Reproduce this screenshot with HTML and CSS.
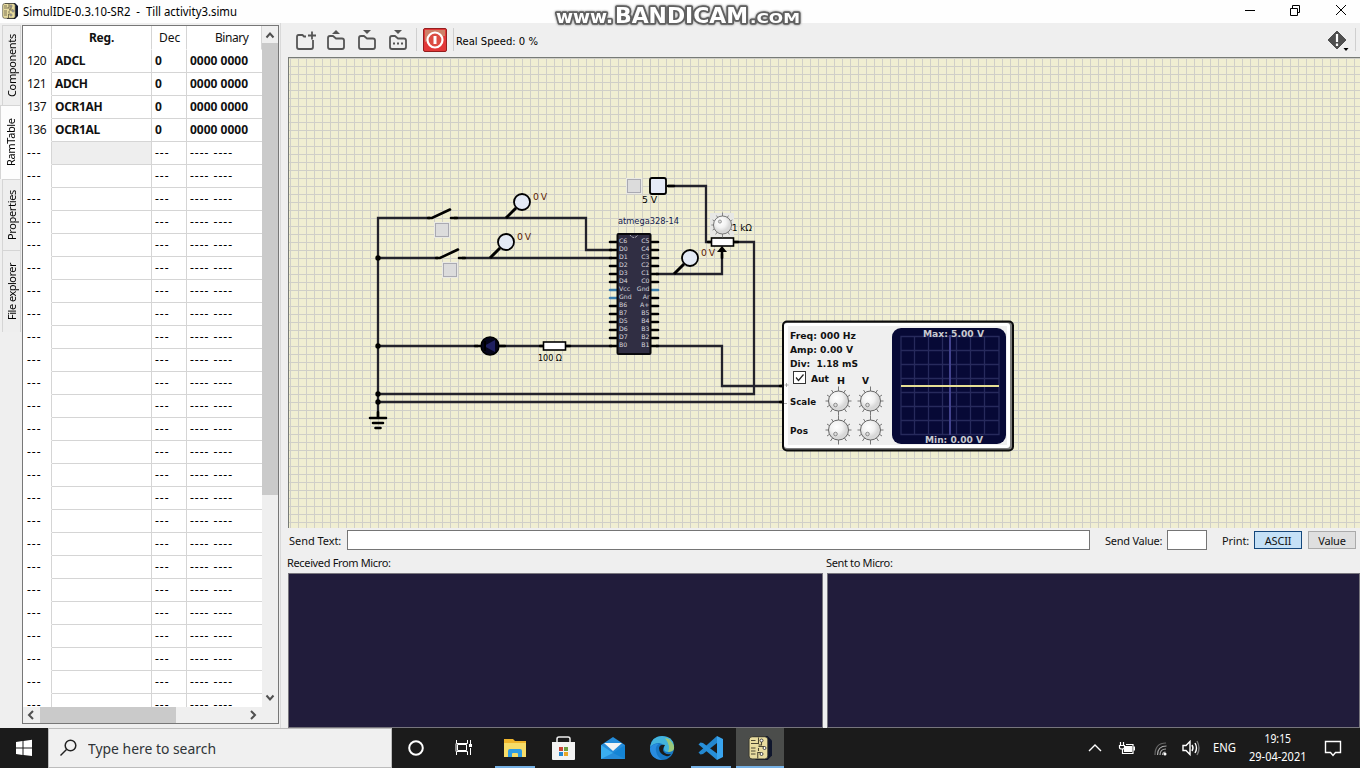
FILE: index.html
```
<!DOCTYPE html>
<html lang="en">
<head>
<meta charset="utf-8">
<title>SimulIDE-0.3.10-SR2 - Till activity3.simu</title>
<link rel="stylesheet" href="styles.css">
</head>
<body>
<div class="screen">
  <header class="titlebar">
    <svg class="app-icon" width="16" height="16" viewBox="0 0 16 16"><use href="#chip-logo"/></svg>
    <svg class="title" width="240" height="22"><text x="0" y="16" textLength="214" lengthAdjust="spacingAndGlyphs" xml:space="preserve">SimulIDE-0.3.10-SR2  -  Till activity3.simu</text></svg>
    <div class="window-buttons">
      <svg width="120" height="23" viewBox="1236 0 120 23" fill="none" stroke="#000" stroke-width="1"><path d="M1245 10.500h10M1290.500 8.500h7v7h-7zM1292.500 8v-2.500h7v7h-2M1336 5l10 10M1346 5l-10 10"/></svg>
    </div>
  </header>

  <svg class="watermark" width="264" height="32" viewBox="548 0 264 32">
    <g class="watermark-glow"><text x="556" y="22.500" textLength="57" lengthAdjust="spacingAndGlyphs" font-size="18.500">www.</text><text x="615" y="23" textLength="133" lengthAdjust="spacingAndGlyphs" font-size="20.500">BANDICAM</text><text x="750" y="22.500" textLength="50" lengthAdjust="spacingAndGlyphs" font-size="14.500">.COM</text></g>
  </svg>

  <div class="workspace">
    <nav class="side-tabs">
      <div class="tab tab-components">Components</div>
      <div class="tab tab-ram active">RamTable</div>
      <div class="tab tab-properties">Properties</div>
      <div class="tab tab-files">File explorer</div>
    </nav>
    <section class="dock">
      <div class="ram-panel">
        <div class="ram-view">
          <div class="ram-table" id="ram">
            <div class="head"></div><div class="head reg-head">Reg.</div><div class="head">Dec</div><div class="head bin-head">Binary</div>
          </div>
          <div class="vscroll">
            <svg width="16" height="17"><path d="M4.500 11.500l3.500-4 3.500 4"/></svg>
            <div class="vthumb"></div>
            <svg class="down" width="16" height="17"><path d="M4.500 5.500l3.500 4 3.500-4"/></svg>
          </div>
        </div>
        <div class="hscroll">
          <svg width="17" height="16"><path d="M10 4l-4 4 4 4"/></svg>
          <div class="hthumb"></div>
          <svg class="right" width="17" height="16"><path d="M7 4l4 4-4 4"/></svg>
        </div>
      </div>
    </section>

    <main class="main">
      <div class="toolbar">
        <svg width="270" height="34" viewBox="288 23 270 34">
          <g fill="none" stroke="#555" stroke-width="1.800" stroke-linejoin="round">
            <path d="M306 36.500h-2l-1.500-1.500h-4q-1.500 0-1.500 2v10q0 2 2 2h12q2 0 2-2v-7M308 35.500h8M312 31.500v8"/>
            <path id="folder" d="M344 40v7q0 2-2 2h-12q-2 0-2-2v-9q0-2 2-2h3l3 2.500h6q2 0 2 2"/>
            <use href="#folder" x="31"/><use href="#folder" x="62"/>
          </g>
          <g fill="#555"><path d="M332 34l4-4 4 4zM363 30h8l-4 4zM394 30h8l-4 4z"/><rect x="393" y="42.500" width="2" height="2"/><rect x="397" y="42.500" width="2" height="2"/><rect x="401" y="42.500" width="2" height="2"/></g>
          <path d="M416.500 28v23M453.500 28v23" stroke="#cfcfcf"/>
          <rect x="423.500" y="28.500" width="23" height="23" rx="1.500" fill="#e23838" stroke="#941e1e"/>
          <path d="M425 30h20v6q-10 1-20 6z" fill="#ce8068"/>
          <circle cx="435" cy="40" r="7.500" fill="#dc4c42" stroke="#fff" stroke-width="2.200"/><path d="M435 36v8" stroke="#fff" stroke-width="3"/>
          <text x="456" y="45" textLength="82" lengthAdjust="spacingAndGlyphs" class="ui-text">Real Speed: 0 %</text>
        </svg>
        <svg class="info" width="36" height="34" viewBox="1324 23 36 34"><path d="M1337 31l9 9-9 9-9-9z" fill="#505050" stroke="#505050" stroke-linejoin="round"/><path d="M1337 34v8M1337 43.500v2.500" stroke="#fff" stroke-width="2.200"/><path d="M1343.500 48h5l-2.500 3z"/><path d="M1355.500 28v23" stroke="#cfcfcf"/></svg>
      </div>

      <div class="circuit">
        <svg class="schematic" width="1071" height="470" viewBox="289 58 1071 470">
          <defs>
            <pattern id="grid" x="290" y="58" width="8" height="8" patternUnits="userSpaceOnUse"><path d="M.5 0v8M0 .5h8" stroke="#d0cfc8" shape-rendering="crispEdges"/></pattern>
            <radialGradient id="knob-face" cx=".4" cy=".35"><stop stop-color="#fff"/><stop offset=".6" stop-color="#f2f2f2"/><stop offset="1" stop-color="#d8d8d8"/></radialGradient>
            <g id="ticks" stroke="#777" stroke-width="1"><path d="M0-14.500v5M0 9.500v5M-13 0h4M9 0h4M-7-11l2 3M7-11l-2 3M-11.500-6l3 2M11.500-6l-3 2M-11.500 6l3-2M11.500 6l-3-2M-8 11l2-3M8 11l-2-3"/></g>
            <g id="knob"><use href="#ticks"/><circle r="10" fill="url(#knob-face)" stroke="#666"/><circle cx="-3" cy="4" r="1.800" fill="#ddd" stroke="#777" stroke-width=".8"/></g>
            <g id="probe"><path d="M-16 16l10-10" stroke="#000" stroke-width="3"/><circle r="8" fill="#e4eaf5" stroke="#000" stroke-width="1.800"/></g>
            <g id="button"><rect x="-8" y="-8" width="16" height="16" fill="#e9e9e5"/><rect x="-6.500" y="-6.500" width="13" height="13" fill="#dcdcdc" stroke="#aaaab2"/></g>
          </defs>
          <rect x="289" y="58" width="1071" height="470" fill="#f0eed2"/><rect x="289" y="58" width="1071" height="470" fill="url(#grid)"/>
          <g fill="none" stroke="#22222b" stroke-width="2.300">
            <path d="M430 218H378V418M454 218H586V250H612M378 258H438M462 258H612M378 346H478M500 346H544M564 346H612M378 394H754V242H734M378 402H782M656 346H722V386H782M656 274H722V254M668 186H706V242H712"/>
          </g>
          <g fill="#000"><circle cx="378" cy="258" r="2.700"/><circle cx="378" cy="346" r="2.700"/><circle cx="378" cy="394" r="2.700"/><circle cx="378" cy="402" r="2.700"/></g>
          <g stroke="#000" stroke-width="2.600" stroke-linecap="round" fill="none">
            <path d="M428 218h4l18-8.500M451 218h6M436 258h4l18-8.500M459 258h6M378 412v6M370 418h16M373 423h10M375.500 428h5M475 346h5M499 346h6M540 346h5M565 346h5M668 186h6M708 242h4M734 242h4M722 250v8M780 386h2M780 402h2"/>
          </g>
          <use href="#button" x="442" y="230"/><use href="#button" x="450" y="270"/><use href="#button" x="634" y="186"/>
          <use href="#probe" x="522" y="202"/><use href="#probe" x="506" y="242"/><use href="#probe" x="690" y="258"/>
          <circle cx="490" cy="346" r="9" fill="#05051a" stroke="#000" stroke-width="1.500"/><path d="M484 346l11-6v12z" fill="#202060"/><path d="M485 341v10" stroke="#000" stroke-width="2"/>
          <rect x="543.500" y="342" width="22" height="8" fill="#fff" stroke="#000" stroke-width="1.600"/>
          <rect x="650" y="178" width="16" height="16" rx="2" fill="#e6ebf7" stroke="#000" stroke-width="1.800"/>
          <rect x="711.500" y="238" width="22" height="8" fill="#fff" stroke="#000" stroke-width="1.600"/><path d="M722 246l5 6h-10z"/>
          <rect x="710" y="213" width="24" height="24" fill="#e7e7e5"/>
          <g transform="translate(722.500 225) scale(.86)"><use href="#ticks"/><circle r="10.500" fill="url(#knob-face)" stroke="#666"/><circle cx="-3" cy="-4" r="1.800" fill="#ddd" stroke="#777" stroke-width=".8"/></g>
          <g class="volt"><text x="533" y="200" textLength="14">0 V</text><text x="517" y="240" textLength="14">0 V</text><text x="701" y="256" textLength="14">0 V</text></g>
          <g class="part-text"><text x="642" y="203" textLength="15">5 V</text><text x="732" y="231" textLength="20" lengthAdjust="spacingAndGlyphs">1 kΩ</text><text x="538" y="361" textLength="24" lengthAdjust="spacingAndGlyphs">100 Ω</text><text x="618" y="224" fill="#10204f" textLength="61" lengthAdjust="spacingAndGlyphs">atmega328-14</text></g>
          <g id="pins"></g>
          <rect x="617.500" y="234" width="33" height="120" rx="1" fill="#302e43" stroke="#08080c" stroke-width="2"/>
          <path d="M630 235q4 5 8 0" fill="none" stroke="#ddd" stroke-width=".8" stroke-dasharray="2 1"/>
          <g id="pin-labels" class="pin-label"></g>

          <rect x="783" y="321.500" width="230" height="129" rx="4" fill="#7d7d7d" stroke="#0b0b0b" stroke-width="2"/>
          <rect x="784" y="323" width="226" height="125" rx="3" fill="#fff"/><rect x="788" y="326" width="219" height="119" fill="#efefef"/>
          <path d="M786.500 383v4M784.500 385h4M784 403.500h3" stroke="#888" stroke-width=".7"/>
          <rect x="892" y="328" width="114" height="116" rx="9" fill="#070936"/>
          <g fill="none" stroke="#272a5c" stroke-width="1.300"><path d="M901 336.500h98v98h-98zM914.500 336v98M928.500 336v98M942.500 336v98M956.500 336v98M970.500 336v98M984.500 336v98M901 350.500h98M901 364.500h98M901 378.500h98M901 392.500h98M901 406.500h98M901 420.500h98"/></g>
          <path d="M950 335v100" stroke="#42428d" stroke-width="2"/><path d="M901 386h98" stroke="#e5df94" stroke-width="2"/>
          <g class="scope-text"><text x="790" y="339" textLength="66" lengthAdjust="spacingAndGlyphs">Freq: 000 Hz</text><text x="790" y="353" textLength="63" lengthAdjust="spacingAndGlyphs">Amp: 0.00 V</text><text x="790" y="367" textLength="68" lengthAdjust="spacingAndGlyphs" xml:space="preserve">Div:  1.18 mS</text><text x="811" y="382" textLength="18" lengthAdjust="spacingAndGlyphs">Aut</text><text x="837" y="384" textLength="8" lengthAdjust="spacingAndGlyphs">H</text><text x="862" y="384" textLength="7" lengthAdjust="spacingAndGlyphs">V</text><text x="790" y="405" textLength="26" lengthAdjust="spacingAndGlyphs">Scale</text><text x="790" y="434" textLength="18" lengthAdjust="spacingAndGlyphs">Pos</text>
          <g fill="#c9c9d0"><text x="923" y="337" textLength="61" lengthAdjust="spacingAndGlyphs">Max: 5.00 V</text><text x="925" y="443" textLength="58" lengthAdjust="spacingAndGlyphs">Min: 0.00 V</text></g></g>
          <rect x="793.500" y="371.500" width="12" height="12" fill="#fff" stroke="#333"/><path d="M796 377.500l2.500 3 5-6" fill="none" stroke="#222" stroke-width="1.200"/>
          <use href="#knob" x="838.500" y="401"/><use href="#knob" x="870.500" y="401"/><use href="#knob" x="838.500" y="430"/><use href="#knob" x="870.500" y="430"/>
        </svg>
      </div>

      <div class="send-row">
        <span class="send-label">Send Text:</span><div class="field send-field"></div>
        <span class="value-label">Send Value:</span><div class="field value-field"></div>
        <span class="print-label">Print:</span><button class="btn pressed">ASCII</button><button class="btn">Value</button>
      </div>
      <div class="terminals">
        <section class="terminal received"><h2>Received From Micro:</h2><div class="output"></div></section>
        <section class="terminal"><h2>Sent to Micro:</h2><div class="output"></div></section>
      </div>
    </main>
  </div>

  <footer class="taskbar">
    <div class="start"><svg width="48" height="40" viewBox="0 728 48 40" fill="#fff"><path d="M16 742l6.500-1v6.500H16zM23.500 741l8.500-1.200v7.700h-8.500zM16 748.500h6.500v6.500l-6.500-1zM23.500 748.500h8.500v7.500l-8.500-1z"/></svg></div>
    <div class="search"><svg width="39" height="38" viewBox="49 729 39 38" fill="none" stroke="#222" stroke-width="1.500"><circle cx="70.500" cy="745.500" r="5.300"/><path d="M66.500 749.500l-6 6"/></svg><svg width="140" height="38"><text x="0" y="25" textLength="128" lengthAdjust="spacingAndGlyphs">Type here to search</text></svg></div>
    <svg class="tasks" width="400" height="40" viewBox="392 728 400 40">
      <rect x="736" y="728" width="48" height="40" fill="#4b4d4b"/>
      <g fill="#76b1e5"><rect x="495" y="766" width="40" height="2"/><rect x="691" y="766" width="40" height="2"/><rect x="736" y="766" width="48" height="2"/></g>
      <circle cx="416" cy="748" r="6.800" fill="none" stroke="#fff" stroke-width="2"/>
      <g fill="none" stroke="#fff" stroke-width="1"><path d="M456.500 740v3.500h11V740M456.500 755v-3.500h11v3.500M457.500 745.500v4M466.500 745.500v4M456 743.500v8M470.500 740v4M470.500 748v7"/><path d="M457.500 744.500h9v6h-9z"/></g><rect x="469" y="744" width="3" height="3" fill="#fff"/>
      <path d="M504 739h9l2 2h11v16h-22z" fill="#efb52c"/><path d="M504 743h22v14h-22z" fill="#f6dc68"/><path d="M508 757v-6q0-2 2-2h10q2 0 2 2v6h-4v-3q0-1-1-1h-4q-1 0-1 1v3z" fill="#2e9ce3"/>
      <path d="M557 743v-4q0-2 2-2h9q2 0 2 2v4" fill="none" stroke="#eee" stroke-width="1.500"/><path d="M552 742h23v17q0 1-1 1h-21q-1 0-1-1z" fill="#f3f3f3"/><path fill="#c84435" d="M559 747h4v4h-4z"/><path fill="#6b9e3f" d="M564 747h4v4h-4z"/><path fill="#2688cf" d="M559 752h4v4h-4z"/><path fill="#eaa726" d="M564 752h4v4h-4z"/>
      <path d="M601 745l12-8 12 8v14h-24z" fill="#258cda"/><path d="M604 743h18l-9 8z" fill="#f4f4f4"/><path d="M601 745l12 8-12 6z" fill="#3aaef0"/><path d="M625 745l-12 8 12 6z" fill="#1484d5"/>
      <circle cx="662" cy="748" r="12" fill="#1677c5"/><path d="M650 747q2-11 12-11 11 0 12 10 0 5-6 6-4 0-4-3 1-5-5-6-5 0-9 4z" fill="#43b4dc"/><path d="M669 739q6 6 5 10-1 3-6 3 3-6-3-14z" fill="#9ac87b"/><path d="M665 745q-5-1-6 3 0 6 7 8 3 1 5-2-7 1-8-4 0-2 2-5z" fill="#1b1b1b"/><path d="M650 748q4-5 9-4-4 2-3 7 1 6 6 9-12-1-12-12z" fill="#298ce0"/>
      <path d="M717 736v7l-14 11-2.500.500-2-2z" fill="#2387cf"/><path d="M700.500 742.500l-2 2L717 760v-6.500l-14-10.500z" fill="#278fd9"/><path d="M717 736l6 3v18l-6 3z" fill="#39a4ee"/>
      <svg x="748" y="736" width="24" height="24" viewBox="0 0 16 16"><g id="chip-logo"><path d="M3 0h10l3 3v10l-3 3H5z" fill="#10172d"/><rect x=".7" y=".5" width="12.500" height="14.800" rx="2" fill="#e8dca0" stroke="#37352c" stroke-width=".6"/><path d="M2 3h3M2 5h3M7 1v4H5M7 7h4M2 8h3M2 10h3M2 12h3M6.500 15v-4h2M9 3v3H7M7 8v2" fill="none" stroke="#4b4633" stroke-width=".7"/><circle cx="9" cy="3" r="1" fill="#fff" stroke="#333" stroke-width=".6"/><circle cx="11" cy="8" r="1" fill="#fff" stroke="#333" stroke-width=".6"/><circle cx="9" cy="12" r="1" fill="#fff" stroke="#333" stroke-width=".6"/></g></svg>
    </svg>
    <svg class="tray" width="280" height="40" viewBox="1080 728 280 40">
      <g fill="none" stroke="#fff" stroke-width="1.400"><path d="M1089 751l6-6 6 6M1183 745.500h3l4-4v13l-4-4h-3z"/><path d="M1192 745q2 3 0 6M1195 743q3 5 0 10"/><path d="M1197 741q4 7 0 14" stroke="#777"/><path d="M1325.500 741.500h15v11h-5l-2.500 3-2.500-3h-5z"/></g>
      <path d="M1120.500 742v3M1123.500 742v3M1119.500 745.500h5v2q0 1.500-2.500 1.500-2.500 0-2.500-1.500zM1122.500 749v4.500h10.500v-9h-7" fill="none" stroke="#fff" stroke-width="1.200"/><path d="M1125 746h7v6h-8v-3zM1133.500 746.500h1.500v4h-1.500z" fill="#fff"/>
      <g fill="none" stroke="#aaa" stroke-width="1.200"><path d="M1155 755q0-12 11-12" stroke="#666"/><path d="M1157.500 755q0-9 9-9M1160 755q0-6 6-6M1162.500 755q0-3 3-3"/></g><circle cx="1165" cy="754" r="1.500" fill="#fff"/>
      <g class="tray-text"><text x="1213" y="752" textLength="23" lengthAdjust="spacingAndGlyphs">ENG</text><text x="1264.500" y="743" textLength="26.500" lengthAdjust="spacingAndGlyphs">19:15</text><text x="1249" y="761" textLength="57.500" lengthAdjust="spacingAndGlyphs">29-04-2021</text></g>
    </svg>
  </footer>
</div>
<script src="app.js"></script>
</body>
</html>
```
FILE: styles.css
```
* { box-sizing: border-box; }
body { margin: 0; overflow: hidden; background: #efefef; color: #111; font: 12px "Noto Sans", "Open Sans", sans-serif; }
svg { display: block; flex: none; }
.screen { width: 1360px; height: 768px; display: flex; flex-direction: column; position: relative; }
.titlebar { height: 23px; flex: none; background: #fefefe; display: flex; align-items: flex-start; padding-left: 2px; }
.app-icon { margin-top: 3px; }
.title { margin-left: 5px; font-size: 12px; }
.window-buttons { margin-left: auto; padding-right: 4px; }
.watermark { position: absolute; left: 548px; top: 0; font-family: "DejaVu Sans", sans-serif; font-weight: bold; }
.watermark-glow { fill: #fff; stroke: #606060; stroke-width: 3.5px; paint-order: stroke; stroke-linejoin: round; filter: drop-shadow(0 0 1px #777); }
.workspace { height: 705px; flex: none; display: flex; }
.side-tabs { width: 22px; flex: none; display: flex; flex-direction: column; align-items: flex-end; padding: 2px 1px 0 0; }
.tab { writing-mode: vertical-rl; transform: rotate(180deg); width: 19px; display: flex; align-items: center; justify-content: center; border: 1px solid #d5d5d5; border-top-width: 0; background: #eee; line-height: 17px; font-size: 11px; letter-spacing: -0.35px; white-space: nowrap; color: #000; }
.tab-components { height: 80px; }
.tab-ram { height: 74px; }
.tab-properties { height: 71px; }
.tab-files { height: 82px; letter-spacing: -0.5px; }
.tab.active { width: 21px; background: #fdfdfd; }
.dock { width: 259px; flex: none; padding: 2px 2px 4px 0; border-right: 1px solid #d9d9d9; }
.ram-panel { width: 257px; height: 699px; border: 1px solid #777; background: #fff; }
.ram-view { display: flex; height: 681px; }
.ram-table { width: 239px; height: 681px; display: grid; grid-template-columns: 29px 100px 35px 75px; grid-template-rows: 23px; grid-auto-rows: 23px; overflow: hidden; align-content: start; font-size: 12px; line-height: 24px; }
.ram-table > div { white-space: nowrap; padding-left: 3px; border-right: 1px solid #d5d5d5; border-bottom: 1px solid #d5d5d5; overflow: hidden; }
.ram-table > .head { border-bottom-color: transparent; padding: 0 0 0 7px; line-height: 24px; }
.ram-table { grid-template-rows: 24px; }
.ram-table > div:not(.head) { line-height: 22px; }
.ram-table > .reg-head { font-weight: bold; text-align: center; padding: 0; letter-spacing: -0.2px; }
.ram-table > .bin-head { padding-left: 28px; letter-spacing: -0.45px; }
.ram-table > .addr { border-bottom-color: transparent; padding-left: 4px; letter-spacing: -0.5px; }
.ram-table > .last { border-right: 0; }
.ram-table > .bold { font-weight: bold; letter-spacing: -0.35px; }
.ram-table > .last.bold { letter-spacing: 0; }
.ram-table > .selected { background: #eee; }
.ram-table > .dash { letter-spacing: 1px; color: #000; }
.vscroll { width: 16px; height: 681px; background: #efefef; display: flex; flex-direction: column; }
.vscroll path, .hscroll path { fill: none; stroke: #505050; stroke-width: 2px; }
.vthumb { height: 452px; background: #cacaca; }
.down { margin-top: auto; }
.hscroll { height: 16px; background: #efefef; display: flex; padding-right: 17px; }
.hthumb { width: 136px; background: #cacaca; }
.right { margin-left: auto; }
.main { margin-left: 7px; width: 1072px; flex: none; display: flex; flex-direction: column; }
.toolbar { height: 34px; flex: none; display: flex; justify-content: space-between; }
.circuit { height: 471px; flex: none; border-top: 1px solid #777b76; border-left: 1px solid #777b76; }
.ui-text { font: 11px "DejaVu Sans Condensed", "DejaVu Sans", sans-serif; }
.part-text { font: 9.3px "DejaVu Sans", sans-serif; }
.volt { font: 9.3px "DejaVu Sans", sans-serif; fill: #5b1d08; }
.pin-label { font: 6.2px "DejaVu Sans", sans-serif; fill: #d7d7de; }
.scope-text { font: bold 9.3px "DejaVu Sans", sans-serif; fill: #111; }
.send-row { height: 25px; flex: none; display: flex; align-items: center; padding: 0 4px 1px 1px; font: 11px "Noto Sans", sans-serif; }
.send-row > * { flex: none; }
.send-label { width: 58px; letter-spacing: -0.05px; }
.field { height: 20px; background: #fff; border: 1px solid #757575; }
.send-field { width: 743px; }
.value-label { margin-left: 15px; width: 62px; white-space: nowrap; letter-spacing: -0.25px; }
.value-field { width: 40px; }
.print-label { margin-left: 15px; width: 32px; letter-spacing: -0.1px; }
.btn { width: 48px; height: 18px; padding: 0; border: 1px solid #aaa; background: #dfdfdf; font: 11px/15px "Noto Sans", sans-serif; letter-spacing: -0.2px; color: #111; }
.btn + .btn { margin-left: 6px; }
.btn.pressed { border-color: #15487c; background: #c5e1f7; }
.terminals { display: flex; gap: 4px; height: 175px; }
.terminal { width: 533px; }
.terminal.received { width: 535px; flex: none; }
.terminal h2 { margin: 0 0 0 -1px; height: 20px; font: 11px/19px "Noto Sans", sans-serif; letter-spacing: -0.35px; }
.output { height: 155px; background: #211c3b; border: 1px solid #77757d; }
.taskbar { height: 40px; flex: none; display: flex; background: #1b1b1b; }
.search { width: 344px; height: 40px; background: #f0f0f0; border: 1px solid #bcbcbc; display: flex; font-size: 15px; fill: #2f3437; }
.tray { margin-left: auto; }
.tray-text { font: 12px "Noto Sans", sans-serif; fill: #fff; }
```
FILE: app.js
```
const table = document.getElementById("ram");
const registers = [["120", "ADCL"], ["121", "ADCH"], ["137", "OCR1AH"], ["136", "OCR1AL"]];
function cell(text, className) {
  const el = document.createElement("div");
  el.className = className;
  el.textContent = text;
  table.append(el);
}
for (let i = 0; i < 29; i++) {
  const reg = registers[i];
  cell(reg ? reg[0] : "---", "addr" + (reg ? "" : " dash"));
  cell(reg ? reg[1] : "", "bold" + (i === 4 ? " selected" : ""));
  cell(reg ? "0" : "---", reg ? "bold" : "dash");
  cell(reg ? "0000 0000" : "---- ----", "last " + (reg ? "bold" : "dash"));
}

const left = ["C6", "D0", "D1", "D2", "D3", "D4", "Vcc", "Gnd", "B6", "B7", "D5", "D6", "D7", "B0"];
const right = ["C5", "C4", "C3", "C2", "C1", "C0", "Gnd", "Ar", "A+", "B5", "B4", "B3", "B2", "B1"];
const ns = "http://www.w3.org/2000/svg";
function shape(parent, name, attrs, text) {
  const el = document.createElementNS(ns, name);
  for (const key in attrs) el.setAttribute(key, attrs[key]);
  if (text) el.textContent = text;
  document.getElementById(parent).append(el);
}
left.forEach((name, i) => {
  const y = 242 + i * 8;
  const line = (d, blue) => shape("pins", "path", { d, stroke: blue ? "#397cad" : "#000", "stroke-width": 2.6, "stroke-linecap": "round" });
  line(`M610 ${y}h7`, name === "Vcc" || name === "Gnd");
  line(`M651 ${y}h7`, right[i] === "Gnd");
  shape("pin-labels", "text", { x: 619, y: y + 1.2 }, name);
  shape("pin-labels", "text", { x: 649.5, y: y + 1.2, "text-anchor": "end" }, right[i]);
});
```
